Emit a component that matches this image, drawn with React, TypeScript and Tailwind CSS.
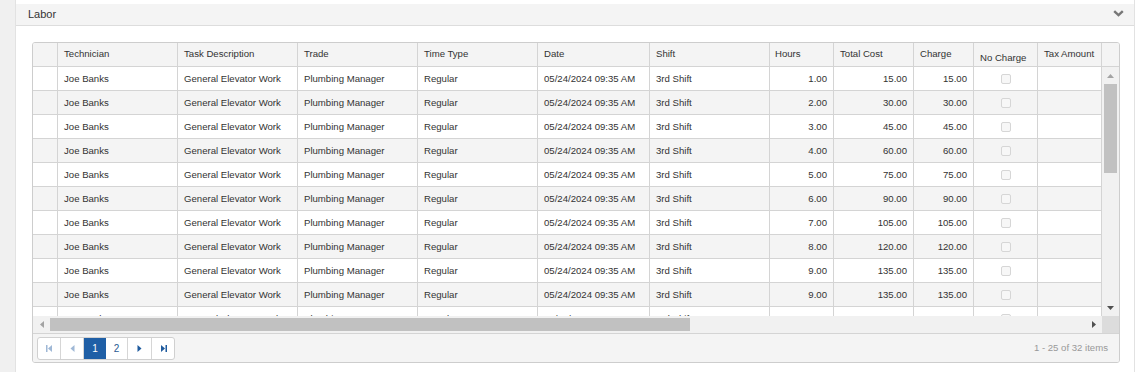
import React from 'react';

interface LaborRow {
  technician: string;
  task: string;
  trade: string;
  timeType: string;
  date: string;
  shift: string;
  hours: number;
}

const hoursList = [1, 2, 3, 4, 5, 6, 7, 8, 9, 9, 10];

const rows: LaborRow[] = hoursList.map((h) => ({
  technician: 'Joe Banks',
  task: 'General Elevator Work',
  trade: 'Plumbing Manager',
  timeType: 'Regular',
  date: '05/24/2024 09:35 AM',
  shift: '3rd Shift',
  hours: h,
}));

const cell = 'flex h-full shrink-0 items-center border-r border-[#d4d4d4] overflow-hidden whitespace-nowrap';
const bodyCell = `${cell} pt-[1px]`;

const Tri = ({ dir, className }: { dir: 'up' | 'down' | 'left' | 'right'; className?: string }) => {
  const pts = {
    up: '0,4 3.5,0 7,4',
    down: '0,0 3.5,4 7,0',
    left: '4,0 0,3.5 4,7',
    right: '0,0 4,3.5 0,7',
  }[dir];
  const box = dir === 'up' || dir === 'down' ? '0 0 7 4' : '0 0 4 7';
  const w = dir === 'up' || dir === 'down' ? 7 : 4;
  const h = dir === 'up' || dir === 'down' ? 4 : 7;
  return (
    <svg width={w} height={h} viewBox={box} className={className}>
      <polygon points={pts} fill="currentColor" />
    </svg>
  );
};

const PagerIcon = ({ kind }: { kind: 'first' | 'prev' | 'next' | 'last' }) => {
  if (kind === 'first')
    return (
      <svg width="7" height="7" viewBox="0 0 7 7">
        <rect x="0" y="0" width="1.5" height="7" fill="currentColor" />
        <polygon points="6,0 2,3.5 6,7" fill="currentColor" />
      </svg>
    );
  if (kind === 'prev')
    return (
      <svg width="5" height="7" viewBox="0 0 5 7">
        <polygon points="4.5,0 0.5,3.5 4.5,7" fill="currentColor" />
      </svg>
    );
  if (kind === 'next')
    return (
      <svg width="5" height="7" viewBox="0 0 5 7">
        <polygon points="0.5,0 4.5,3.5 0.5,7" fill="currentColor" />
      </svg>
    );
  return (
    <svg width="7" height="7" viewBox="0 0 7 7">
      <polygon points="1,0 5,3.5 1,7" fill="currentColor" />
      <rect x="5.5" y="0" width="1.5" height="7" fill="currentColor" />
    </svg>
  );
};

export default function App() {
  return (
    <div
      className="flex h-[372px] w-[1138px] bg-white text-[#333]"
      style={{ fontFamily: '"Liberation Sans", Arial, sans-serif' }}
    >
      <div className="h-full w-[16px] shrink-0 border-r border-[#e2e2e2] bg-[#f0f0f0]" />

      <div className="mr-[3px] flex flex-1 flex-col border-r border-[#e2e2e2] pt-[4px]">
        {/* panel header */}
        <div className="flex h-[22px] items-center justify-between border-b border-[#dddddd] bg-[#f4f4f4] pl-[12px] pr-[10px]">
          <span className="text-[11px]">Labor</span>
          <svg width="11" height="7" viewBox="0 0 11 7" className="mt-[-2px] text-[#777]">
            <polyline points="1.2,1.2 5.5,5.2 9.8,1.2" fill="none" stroke="currentColor" strokeWidth="2.4" />
          </svg>
        </div>

        <div className="pl-[16px] pt-[16px]">
          <div className="w-[1088px] overflow-hidden rounded-[3px] border border-[#cdcdcd] text-[9.6px]">
            {/* header */}
            <div className="flex h-[24px] border-b border-[#d4d4d4] bg-[#f4f4f4]">
              <div className={`${cell} w-[25px]`} />
              <div className={`${cell} w-[120px] pl-[6px]`}>Technician</div>
              <div className={`${cell} w-[120px] pl-[6px]`}>Task Description</div>
              <div className={`${cell} w-[120px] pl-[6px]`}>Trade</div>
              <div className={`${cell} w-[120px] pl-[6px]`}>Time Type</div>
              <div className={`${cell} w-[112px] pl-[6px]`}>Date</div>
              <div className={`${cell} w-[120px] pl-[6px]`}>Shift</div>
              <div className={`${cell} w-[64px] pl-[5px]`}>Hours</div>
              <div className={`${cell} w-[80px] pl-[6px]`}>Total Cost</div>
              <div className={`${cell} w-[60px] pl-[6px]`}>Charge</div>
              <div className={`${cell} w-[64px] pl-[6px] pt-[7px]`}>No Charge</div>
              <div className={`${cell} w-[64px] pl-[6px]`}>Tax Amount</div>
              <div className="h-full w-[17px] shrink-0" />
            </div>

            {/* body */}
            <div className="flex h-[249px] overflow-hidden">
              <div className="w-[1069px] shrink-0">
                {rows.map((r, i) => (
                  <div
                    key={i}
                    className={`flex h-[24px] border-b border-[#d4d4d4] ${i % 2 === 1 ? 'bg-[#f4f4f4]' : 'bg-white'}`}
                  >
                    <div className={`${bodyCell} w-[25px]`} />
                    <div className={`${bodyCell} w-[120px] pl-[6px]`}>{r.technician}</div>
                    <div className={`${bodyCell} w-[120px] pl-[6px]`}>{r.task}</div>
                    <div className={`${bodyCell} w-[120px] pl-[6px]`}>{r.trade}</div>
                    <div className={`${bodyCell} w-[120px] pl-[6px]`}>{r.timeType}</div>
                    <div className={`${bodyCell} w-[112px] pl-[6px]`}>{r.date}</div>
                    <div className={`${bodyCell} w-[120px] pl-[6px]`}>{r.shift}</div>
                    <div className={`${bodyCell} w-[64px] justify-end pr-[6px]`}>{r.hours.toFixed(2)}</div>
                    <div className={`${bodyCell} w-[80px] justify-end pr-[6px]`}>{(r.hours * 15).toFixed(2)}</div>
                    <div className={`${bodyCell} w-[60px] justify-end pr-[6px]`}>{(r.hours * 15).toFixed(2)}</div>
                    <div className={`${cell} w-[64px] justify-center`}>
                      <span className="h-[10px] w-[10px] rounded-[2px] border border-[#d6d6d6] bg-[#f7f7f7]" />
                    </div>
                    <div className={`${cell} w-[64px]`} />
                  </div>
                ))}
              </div>

              {/* vertical scrollbar */}
              <div className="flex w-[17px] shrink-0 flex-col items-center bg-[#f1f1f1]">
                <div className="flex h-[17px] w-full items-center justify-center text-[#a3a3a3]">
                  <Tri dir="up" />
                </div>
                <div className="h-[89px] w-[13px] bg-[#c1c1c1]" />
                <div className="flex-1" />
                <div className="flex h-[17px] w-full items-center justify-center text-[#505050]">
                  <Tri dir="down" />
                </div>
              </div>
            </div>

            {/* horizontal scrollbar */}
            <div className="flex h-[17px]">
              <div className="flex w-[1069px] shrink-0 items-center bg-[#f1f1f1]">
                <div className="flex h-full w-[17px] items-center justify-center text-[#a3a3a3]">
                  <Tri dir="left" />
                </div>
                <div className="h-[13px] w-[640px] bg-[#c1c1c1]" />
                <div className="flex-1" />
                <div className="flex h-full w-[17px] items-center justify-center text-[#505050]">
                  <Tri dir="right" />
                </div>
              </div>
              <div className="w-[17px] shrink-0 bg-[#dcdcdc]" />
            </div>

            {/* pager */}
            <div className="flex h-[29px] items-center justify-between border-t border-[#d4d4d4] bg-[#f4f4f4] pl-[4px] pr-[11px]">
              <div className="flex h-[23px] overflow-hidden rounded-[3px] border border-[#d0d0d0] bg-white text-[10px]">
                <div className="flex w-[23px] items-center justify-center border-r border-[#d6d6d6] text-[#9fb8d6]">
                  <PagerIcon kind="first" />
                </div>
                <div className="flex w-[23px] items-center justify-center border-r border-[#d6d6d6] text-[#9fb8d6]">
                  <PagerIcon kind="prev" />
                </div>
                <div className="flex w-[22px] items-center justify-center bg-[#1f5fa6] text-white">1</div>
                <div className="flex w-[22px] items-center justify-center border-r border-[#d6d6d6] text-[#2b5b93]">2</div>
                <div className="flex w-[24px] items-center justify-center border-r border-[#d6d6d6] text-[#1f5b9e]">
                  <PagerIcon kind="next" />
                </div>
                <div className="flex w-[22px] items-center justify-center text-[#1f5b9e]">
                  <PagerIcon kind="last" />
                </div>
              </div>
              <span className="text-[#999]">1 - 25 of 32 items</span>
            </div>
          </div>
        </div>
      </div>
    </div>
  );
}
